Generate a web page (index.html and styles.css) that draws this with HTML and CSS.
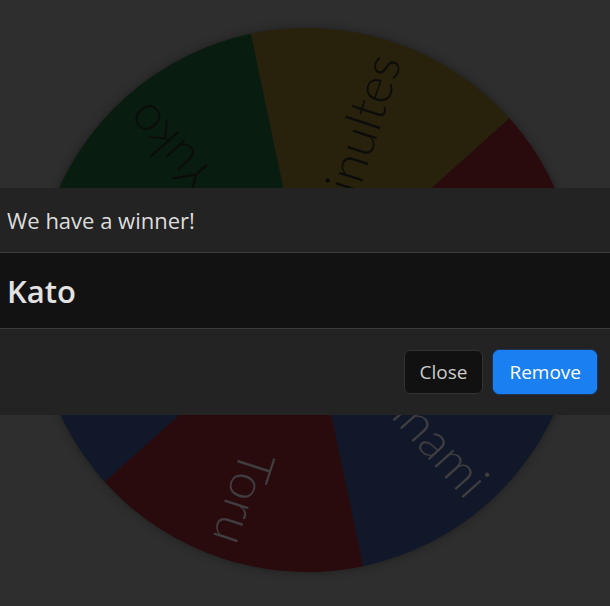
FILE: index.html
```html
<!DOCTYPE html>
<html lang="en">
<head>
<meta charset="utf-8">
<title>Wheel</title>
<link rel="stylesheet" href="styles.css">
</head>
<body>
<main class="page">
  <svg class="wheel" width="544" height="544" viewBox="-272 -272 544 544" aria-label="Name wheel">
    <defs>
      <path id="wedge" d="M0 0 L-136 -235.56 A272 272 0 0 1 136 -235.56 Z"/>
    </defs>
    <g transform="rotate(-41.9)">
      <use href="#wedge" class="seg-green"/>
      <text class="label dark" transform="rotate(-90)" x="256" y="0" dy="0.32em" text-anchor="end">Yuko</text>
    </g>
    <g transform="rotate(18.1)">
      <use href="#wedge" class="seg-yellow"/>
      <text class="label dark" transform="rotate(-90)" x="256" y="0" dy="0.32em" text-anchor="end">Minultes</text>
    </g>
    <g transform="rotate(78.1)">
      <use href="#wedge" class="seg-red"/>
      <text class="label light" transform="rotate(-90)" x="256" y="0" dy="0.32em" text-anchor="end">Kato</text>
    </g>
    <g transform="rotate(138.1)">
      <use href="#wedge" class="seg-blue"/>
      <text class="label light" transform="rotate(-90)" x="256" y="0" dy="0.32em" text-anchor="end">Minami</text>
    </g>
    <g transform="rotate(198.1)">
      <use href="#wedge" class="seg-red"/>
      <text class="label light" transform="rotate(-90)" x="256" y="0" dy="0.32em" text-anchor="end">Toru</text>
    </g>
    <g transform="rotate(258.1)">
      <use href="#wedge" class="seg-blue"/>
      <text class="label light" transform="rotate(-90)" x="256" y="0" dy="0.32em" text-anchor="end">Hiro</text>
    </g>
  </svg>
</main>

<div class="modal" role="dialog" aria-labelledby="modal-title">
  <div class="modal-header">
    <h5 id="modal-title" class="modal-title">We have a winner!</h5>
  </div>
  <div class="modal-body">
    <h2 class="winner">Kato</h2>
  </div>
  <div class="modal-footer">
    <button class="btn btn-close" type="button">Close</button>
    <button class="btn btn-remove" type="button">Remove</button>
  </div>
</div>
</body>
</html>
```

FILE: styles.css
```css
html, body {
  margin: 0;
  padding: 0;
}

body {
  background: #2e2e2e;
  width: 610px;
  height: 606px;
  overflow: hidden;
  font-family: "Open Sans", "Noto Sans", "Liberation Sans", sans-serif;
}

.page {
  padding: 28px 0 0 35px;
}

.wheel {
  display: block;
  filter: drop-shadow(0 0 5px rgba(0, 0, 0, 0.35));
}

.seg-green { fill: #081d0f; }
.seg-yellow { fill: #28210c; }
.seg-red { fill: #290b0e; }
.seg-blue { fill: #101829; }

.label {
  font-family: Lato, "Open Sans", sans-serif;
  font-weight: 300;
  font-size: 50px;
}

.label.dark { fill: #0c0d0b; }
.label.light { fill: #403d40; }

.modal {
  position: fixed;
  top: 188px;
  left: 0;
  right: 0;
  display: flex;
  flex-direction: column;
  background: #232323;
}

.modal-header {
  height: 64px;
  display: flex;
  align-items: center;
  padding: 0 7px;
  border-bottom: 1px solid #3b3b3b;
  background: #232323;
}

.modal-title {
  margin: 0;
  font-size: 22px;
  font-weight: 400;
  color: #dddddd;
  line-height: 1;
}

.modal-body {
  height: 75px;
  display: flex;
  align-items: center;
  padding: 0 7px;
  background: #121212;
  border-bottom: 1px solid #3b3b3b;
}

.winner {
  margin: 0;
  font-size: 31px;
  font-weight: 600;
  color: #e2e2e2;
  line-height: 1;
  position: relative;
  top: 1px;
}

.modal-footer {
  height: 86px;
  display: flex;
  align-items: center;
  justify-content: flex-end;
  gap: 10px;
  padding: 0 13px 0 0;
  background: #232323;
}

.btn {
  height: 44px;
  padding: 0 15px;
  border-radius: 6px;
  font-family: "Open Sans", "Noto Sans", sans-serif;
  font-size: 19px;
  line-height: 1;
  cursor: pointer;
}

.btn-close {
  background: #111111;
  border: 1px solid #333333;
  color: #cbcbcb;
}

.btn-remove {
  background: #1a7ff0;
  border: 1px solid #1a7ff0;
  color: #ffffff;
  box-shadow: 0 0 0 1px #1c3458;
}
```
